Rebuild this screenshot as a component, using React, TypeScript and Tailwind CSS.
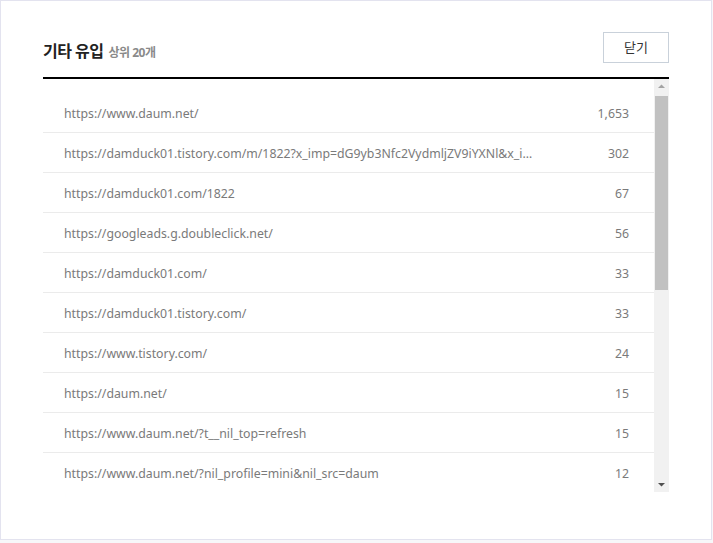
import React from "react";

const rows: [string, string][] = [
  ["https://www.daum.net/", "1,653"],
  ["https://damduck01.tistory.com/m/1822?x_imp=dG9yb3Nfc2VydmljZV9iYXNl&x_index=0&x_pos=0", "302"],
  ["https://damduck01.com/1822", "67"],
  ["https://googleads.g.doubleclick.net/", "56"],
  ["https://damduck01.com/", "33"],
  ["https://damduck01.tistory.com/", "33"],
  ["https://www.tistory.com/", "24"],
  ["https://daum.net/", "15"],
  ["https://www.daum.net/?t__nil_top=refresh", "15"],
  ["https://www.daum.net/?nil_profile=mini&nil_src=daum", "12"],
  ["https://m.search.daum.net/", "9"],
  ["https://search.daum.net/", "8"],
];

function App() {
  return (
    <div
      className="h-[543px] w-[713px] bg-[#f7f7f9] overflow-hidden"
      style={{ fontFamily: '"Noto Sans", "Noto Sans CJK KR", sans-serif' }}
    >
      <div className="h-[540px] w-[712px] bg-white border border-[#e3e3ef] px-[42px] pt-[31px]">
        <div className="flex items-center justify-between h-[31px]">
          <div className="flex items-baseline gap-[5px] mt-[6px]">
            <h2 className="text-[16px] font-bold text-[#222] tracking-[-0.5px]">기타 유입</h2>
            <span className="text-[12px] font-bold text-[#8a8a8a] tracking-[-0.5px]">상위 20개</span>
          </div>
          <button className="h-[31px] w-[66px] border border-[#c9d1da] bg-white text-[13px] text-[#333]">
            닫기
          </button>
        </div>
        <div className="mt-[14px] h-[2px] bg-black" />
        <div className="flex h-[413px]">
          <ul className="flex-1 overflow-hidden pt-[14px]">
            {rows.map(([url, n], i) => (
              <li
                key={i}
                className="flex items-center h-[40px] border-b border-[#ebebeb] pl-[21px] pr-[25px] pt-[3px] text-[12.3px] text-[#7a7a7a]"
              >
                <span className="w-[472px] truncate">{url}</span>
                <span className="ml-auto">{n}</span>
              </li>
            ))}
          </ul>
          <div className="w-[15px] bg-[#f1f1f1] flex flex-col items-center">
            <svg width="15" height="15" viewBox="0 0 15 15">
              <path d="M4 9 L7.5 5.5 L11 9 Z" fill="#a3a3a3" />
            </svg>
            <div className="mt-[2px] h-[194px] w-[13px] bg-[#c1c1c1]" />
            <div className="flex-1" />
            <svg width="15" height="15" viewBox="0 0 15 15">
              <path d="M4 6 L7.5 9.5 L11 6 Z" fill="#505050" />
            </svg>
          </div>
        </div>
      </div>
    </div>
  );
}

export default App;
